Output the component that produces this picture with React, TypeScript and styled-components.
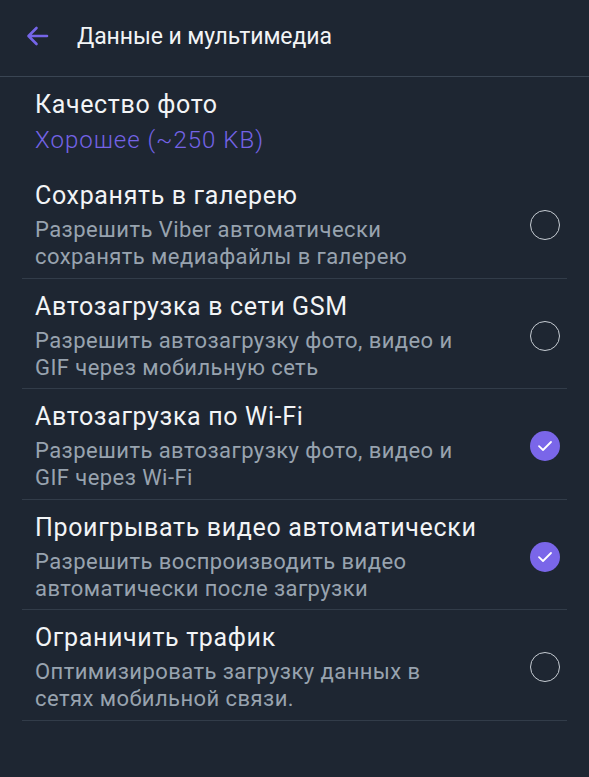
import React from 'react';
import styled, { createGlobalStyle } from 'styled-components';

const GlobalStyle = createGlobalStyle`
  html, body {
    margin: 0;
    padding: 0;
    background: #1e2632;
  }
  body {
    font-family: Roboto, "Noto Sans", sans-serif;
    -webkit-font-smoothing: antialiased;
  }
`;

const Screen = styled.div`
  width: 589px;
  min-height: 777px;
  background: #1e2632;
  display: flex;
  flex-direction: column;
`;

const Header = styled.header`
  height: 77px;
  padding-bottom: 4px;
  display: flex;
  align-items: center;
  border-bottom: 1px solid #3a4553;
  box-sizing: border-box;
`;

const BackButton = styled.button`
  width: 77px;
  height: 40px;
  padding: 0 0 0 26px;
  border: none;
  background: transparent;
  display: flex;
  align-items: center;
  cursor: pointer;
`;

const Title = styled.h1`
  margin: 0;
  font-size: 23px;
  font-weight: 400;
  color: #f2f4f6;
  letter-spacing: -0.1px;
`;

const List = styled.div`
  display: flex;
  flex-direction: column;
  padding: 0 22px;
`;

const Row = styled.div<{ $divider?: boolean; $first?: boolean }>`
  display: flex;
  align-items: center;
  padding: ${p => (p.$first ? '12px 7px 14px 13px' : '12px 7px 7.5px 13px')};
  border-bottom: ${p => (p.$divider ? '1px solid #323c49' : 'none')};
`;

const Texts = styled.div`
  flex: 1;
  display: flex;
  flex-direction: column;
`;

const RowTitle = styled.div`
  font-size: 25px;
  line-height: 32px;
  letter-spacing: 0.65px;
  color: #f2f4f6;
`;

const RowSub = styled.div<{ $accent?: boolean }>`
  margin-top: ${p => (p.$accent ? '6px' : '4px')};
  font-size: ${p => (p.$accent ? '24px' : '22px')};
  font-weight: ${p => (p.$accent ? 300 : 400)};
  line-height: 27px;
  letter-spacing: ${p => (p.$accent ? '1px' : '0.43px')};
  color: ${p => (p.$accent ? '#7463e6' : '#98a3af')};
  white-space: pre-line;
`;

const Check = styled.div<{ $on: boolean }>`
  width: 30px;
  height: 30px;
  box-sizing: border-box;
  border-radius: 50%;
  flex-shrink: 0;
  display: flex;
  align-items: center;
  justify-content: center;
  border: ${p => (p.$on ? 'none' : '1.5px solid #c6ccd3')};
  background: ${p => (p.$on ? '#7a66e9' : 'transparent')};
`;

const items = [
  { title: 'Сохранять в галерею', sub: 'Разрешить Viber автоматически\nсохранять медиафайлы в галерею', on: false },
  { title: 'Автозагрузка в сети GSM', sub: 'Разрешить автозагрузку фото, видео и\nGIF через мобильную сеть', on: false },
  { title: 'Автозагрузка по Wi-Fi', sub: 'Разрешить автозагрузку фото, видео и\nGIF через Wi-Fi', on: true },
  { title: 'Проигрывать видео автоматически', sub: 'Разрешить воспроизводить видео\nавтоматически после загрузки', on: true },
  { title: 'Ограничить трафик', sub: 'Оптимизировать загрузку данных в\nсетях мобильной связи.', on: false },
];

export default function App() {
  return (
    <Screen>
      <GlobalStyle />
      <Header>
        <BackButton aria-label="Назад">
          <svg width="23" height="20" viewBox="0 0 23 20" fill="none">
            <path d="M21 10H3M10.5 2L2.5 10L10.5 18" stroke="#7565e8" strokeWidth="2.6" strokeLinecap="round" strokeLinejoin="round" />
          </svg>
        </BackButton>
        <Title>Данные и мультимедиа</Title>
      </Header>
      <List>
        <Row $first>
          <Texts>
            <RowTitle>Качество фото</RowTitle>
            <RowSub $accent>Хорошее (~250 KB)</RowSub>
          </Texts>
        </Row>
        {items.map(item => (
          <Row key={item.title} $divider>
            <Texts>
              <RowTitle>{item.title}</RowTitle>
              <RowSub>{item.sub}</RowSub>
            </Texts>
            <Check $on={item.on}>
              {item.on && (
                <svg width="16" height="12" viewBox="0 0 16 12" fill="none">
                  <path d="M2 6.2L6 10L14 2" stroke="#ffffff" strokeWidth="1.8" strokeLinecap="round" strokeLinejoin="round" />
                </svg>
              )}
            </Check>
          </Row>
        ))}
      </List>
    </Screen>
  );
}
